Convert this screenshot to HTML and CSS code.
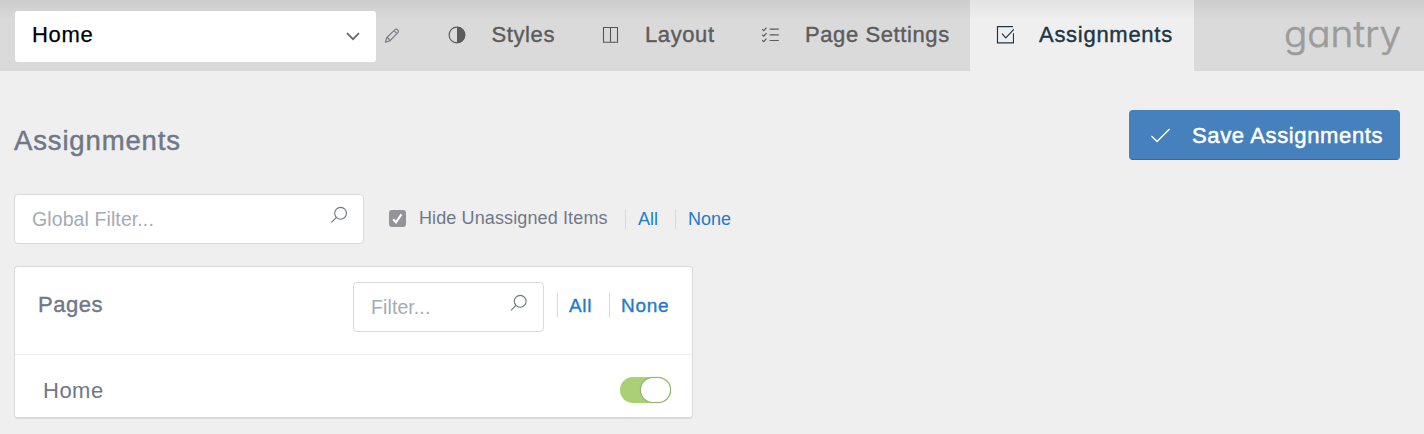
FILE: index.html
```html
<!DOCTYPE html>
<html lang="en">
<head>
<meta charset="utf-8">
<title>Assignments</title>
<link rel="stylesheet" href="styles.css">
</head>
<body>
<header class="topbar">
  <div class="outline-select">
    <span>Home</span>
    <svg width="14" height="10" viewBox="0 0 14 10"><path d="M1 1.2 7 7.2 13 1.2" fill="none" stroke="#666" stroke-width="1.7"/></svg>
  </div>
  <svg class="pencil" width="16" height="16" viewBox="0 0 16 16" fill="none" stroke="#777e89" stroke-width="1.2" stroke-linejoin="round"><path d="M1.4 14.2 2.6 9.8 11 1.6Q12.2 .6 13.7 2 15 3.4 13.9 4.7L5.7 13ZM10 2.6 12.9 5.5M2.6 9.8Q5.4 10 5.7 13"/></svg>
  <nav class="tabs">
    <a class="tab tab-styles">
      <svg width="18" height="18" viewBox="0 0 18 18"><circle cx="9" cy="9" r="7.9" fill="none" stroke="#555" stroke-width="1.1"/><path d="M9 1a8 8 0 0 1 0 16Z" fill="#5c5c5c"/></svg>
      <span>Styles</span>
    </a>
    <a class="tab tab-layout">
      <svg width="18" height="18" viewBox="0 0 18 18" fill="none" stroke="#555" stroke-width="1.1"><path d="M1.5 1.5H15.5V16.2H1.5ZM8.5 1.5V16.2"/></svg>
      <span>Layout</span>
    </a>
    <a class="tab tab-page">
      <svg width="18" height="18" viewBox="0 0 18 18" fill="none" stroke="#5c5c5c" stroke-width="1.2"><path d="M8.7 3.2H17.8M8.7 8.9H17.8M8.7 14.5H17.8M1.2 3.1 2.8 4.6 5.4 1.6M1.2 8.7 2.8 10.2 5.4 7.2M1.2 14.2 2.8 15.7 5.4 12.7"/></svg>
      <span>Page Settings</span>
    </a>
    <a class="tab tab-active">
      <svg width="19" height="18" viewBox="0 0 19 18" fill="none" stroke="#203645" stroke-width="1.2"><path d="M18 .6H2.5V16.8H18.5V7.2M7 7.7 10.8 11.8 18.8 3.4"/></svg>
      <span>Assignments</span>
    </a>
  </nav>
  <svg class="logo" width="120" height="50" viewBox="0 0 120 50"><text x="1" y="37" textLength="117" lengthAdjust="spacingAndGlyphs">gantry</text></svg>
</header>
<main class="content">
  <div class="heading">
    <h1>Assignments</h1>
    <button class="save">
      <svg width="20" height="16" viewBox="0 0 20 16"><path d="M.4 9 6 14.6 18.6 2" fill="none" stroke="#fff" stroke-width="1.4"/></svg>
      <span>Save Assignments</span>
    </button>
  </div>
  <div class="filters">
    <div class="field field-global">
      <span>Global Filter...</span>
      <svg class="search" width="18" height="18" viewBox="0 0 18 18" fill="none" stroke="#6f7681" stroke-width="1.1"><circle cx="10.6" cy="7.3" r="5.9"/><path d="M6.4 11.4 1.4 16.4"/></svg>
    </div>
    <span class="checkbox"><svg width="17" height="17" viewBox="0 0 17 17"><path d="M4.2 9.2 7 12.4 12.4 4.3" fill="none" stroke="#fff" stroke-width="2.1"/></svg></span>
    <span class="hide-label">Hide Unassigned Items</span>
    <a class="link link-all">All</a>
    <a class="link link-none">None</a>
  </div>
  <section class="card">
    <div class="card-head">
      <h2>Pages</h2>
      <div class="field field-card">
        <span>Filter...</span>
        <svg class="search" width="18" height="18" viewBox="0 0 18 18" fill="none" stroke="#6f7681" stroke-width="1.1"><circle cx="10.2" cy="7.3" r="5.9"/><path d="M6 11.4 1 16.4"/></svg>
      </div>
      <a class="card-link card-all">All</a>
      <a class="card-link card-none">None</a>
    </div>
    <div class="card-row">
      <span>Home</span>
      <span class="toggle"><span class="knob"></span></span>
    </div>
  </section>
</main>
</body>
</html>
```
FILE: styles.css
```css
* { box-sizing: border-box; }
body {
  margin: 0;
  height: 434px;
  overflow: hidden;
  background: #efefef;
  font-family: "Liberation Sans", Arial, sans-serif;
  color: #6f7888;
}
svg { display: block; flex: none; }
h1, h2 { margin: 0; }

.topbar {
  height: 71px;
  display: flex;
  align-items: flex-start;
  padding-left: 15px;
  background: linear-gradient(#cdcdcd, #dadada 20px);
}
.outline-select {
  width: 361px;
  height: 51px;
  margin-top: 11px;
  padding: 0 17px;
  display: flex;
  align-items: center;
  justify-content: space-between;
  border-radius: 3px;
  background: #fff;
  color: #000;
  font-size: 22px;
  letter-spacing: .65px;
  -webkit-text-stroke: .25px;
}
.outline-select span { padding-bottom: 4px; }
.outline-select svg { margin-right: -1px; }
.pencil { margin: 28px 0 0 8px; }
.tabs { display: flex; margin-left: 27px; }
.tab {
  height: 71px;
  display: flex;
  align-items: center;
  padding: 0 0 2px 21px;
  color: #5c5c5c;
  font-size: 22px;
  letter-spacing: .6px;
  white-space: nowrap;
  -webkit-text-stroke: .4px;
}
.tab svg { margin-right: 25.5px; }
.tab-styles { width: 154px; }
.tab-layout { width: 160px; }
.tab-layout svg { margin-right: 25px; }
.tab-page { width: 229px; padding-left: 20px; }
.tab-page svg { margin-right: 26px; }
.tab-active {
  width: 224px;
  height: 72px;
  padding: 0 0 3px 25px;
  background: linear-gradient(#e2e2e2, #efefef 20px);
  color: #203645;
  letter-spacing: .72px;
}
.tab-active svg { margin-right: 25px; }
.logo { margin-left: 89px; margin-top: 10px; }
.logo text {
  font-family: Inter, Roboto, sans-serif;
  font-weight: 300;
  font-size: 37px;
  font-feature-settings: "cv11";
  fill: #9c9c9c;
  stroke: #9c9c9c;
  stroke-width: .6px;
}

.content { padding: 38px 24px 0 14px; }
.heading { display: flex; justify-content: space-between; align-items: flex-start; }
.heading h1 {
  margin-top: 16px;
  font-size: 27.5px;
  line-height: 32px;
  font-weight: 400;
  letter-spacing: .85px;
  -webkit-text-stroke: .5px;
}
.save {
  width: 271px;
  height: 50px;
  margin-top: 1px;
  padding: 0 0 0 21px;
  display: flex;
  align-items: center;
  border: 1px solid #4480bd;
  border-bottom-color: #2f6ba8;
  border-radius: 4px;
  background: #4680bd;
  color: #fff;
  font: 22px "Liberation Sans", Arial, sans-serif;
  letter-spacing: .64px;
  -webkit-text-stroke: .5px;
  white-space: nowrap;
}
.save svg { margin-right: 21px; }
.save span { padding-top: 1px; }
.filters { display: flex; align-items: center; margin-top: 34px; font-size: 18px; }
.field {
  height: 50px;
  display: flex;
  justify-content: space-between;
  align-items: center;
  border: 1px solid #dadada;
  border-radius: 4px;
  background: #fff;
  color: #a5abb3;
  font-size: 19.5px;
  letter-spacing: .1px;
}
.search { margin-bottom: 8px; }
.field-global { width: 350px; padding: 0 15px 0 17px; }
.field-card { width: 191px; padding: 0 15px 0 17px; }
.field span { padding-top: 1px; }
.checkbox { width: 17px; height: 17px; margin-left: 25px; border-radius: 3px; background: #939398; }
.hide-label { margin-left: 13px; width: 206px; letter-spacing: .12px; }
.filters .checkbox, .hide-label, .link { margin-bottom: 1px; }
.hide-label { padding-bottom: 1px; }
.link, .card-link { color: #227cc8; }
.link { height: 20px; line-height: 20px; padding-left: 12px; border-left: 1px solid #d9d9d9; }
.link-all { width: 50px; }

.card {
  width: 679px;
  height: 153px;
  margin-top: 22px;
  border: 1px solid #dadada;
  border-bottom-width: 2px;
  border-radius: 4px;
  background: #fff;
}
.card-head { height: 88px; display: flex; padding: 15px 0 0 23px; border-bottom: 1px solid #eee; }
.card-head h2 {
  width: 315px;
  margin-top: 10px;
  line-height: 26px;
  font-size: 22px;
  font-weight: 400;
  letter-spacing: .5px;
  -webkit-text-stroke: .4px;
}
.card-link {
  height: 24px;
  line-height: 26px;
  margin-top: 11px;
  padding-left: 11px;
  border-left: 1px solid #d9d9d9;
  font-size: 19px;
  letter-spacing: .7px;
  -webkit-text-stroke: .35px;
}
.card-all { width: 52px; margin-left: 13px; }
.card-row {
  height: 62px;
  display: flex;
  align-items: center;
  justify-content: space-between;
  padding: 7px 21px 0 28px;
  font-size: 22px;
  letter-spacing: .5px;
}
.card-row > span:first-child { padding-top: 2px; }
.toggle {
  width: 51px;
  height: 26px;
  padding: 1px;
  display: flex;
  justify-content: flex-end;
  border-radius: 13px;
  background: #a9d075;
}
.knob { width: 29px; height: 24px; border-radius: 12px; background: #fff; box-shadow: 0 0 1px 1px #8fae68; }
```
